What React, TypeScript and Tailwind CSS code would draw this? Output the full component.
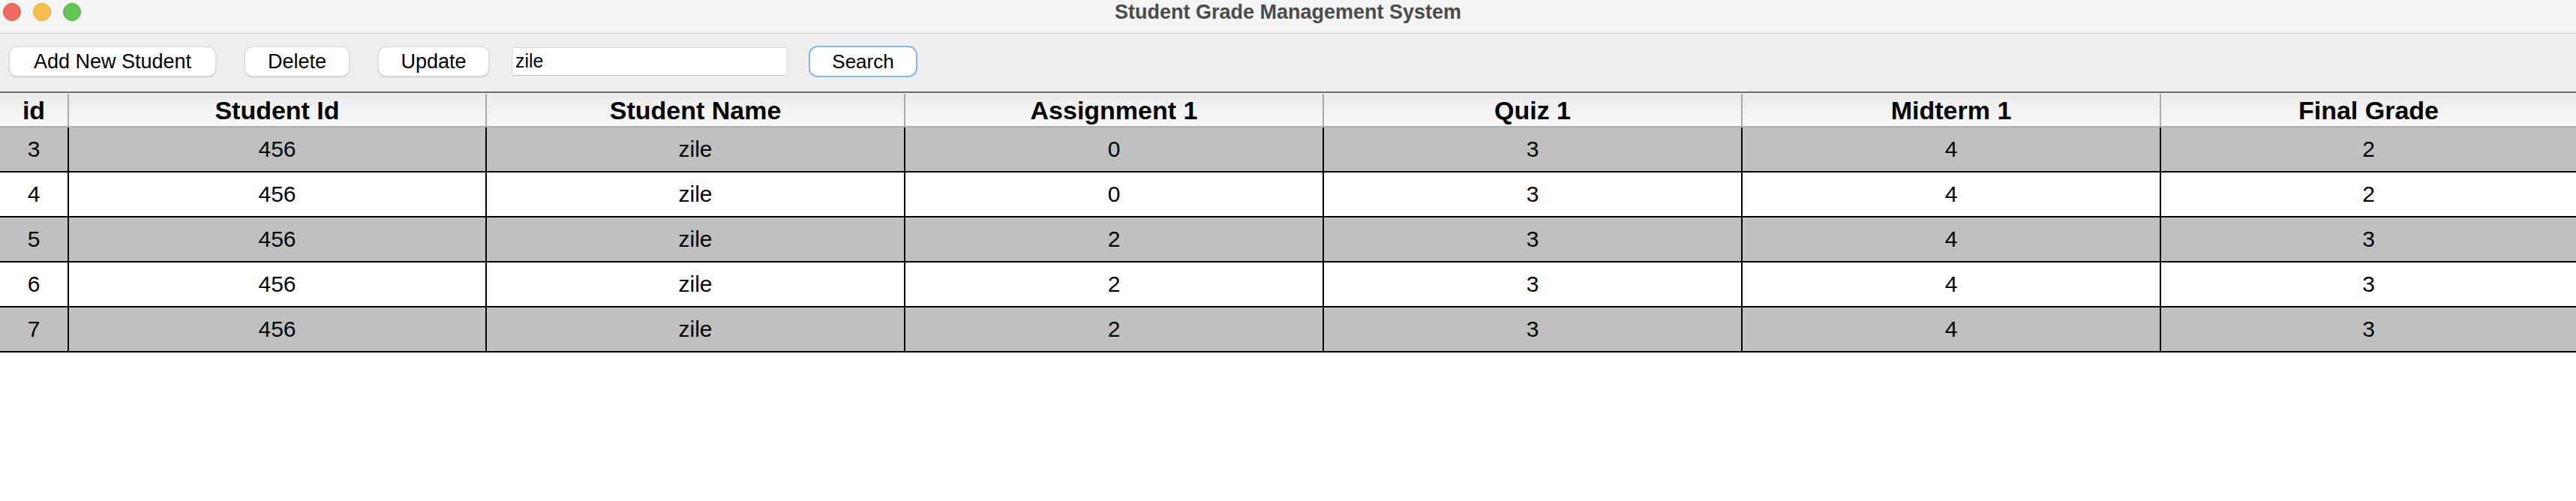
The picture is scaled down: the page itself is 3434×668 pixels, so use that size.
import React from "react";

const headers = ["id", "Student Id", "Student Name", "Assignment 1", "Quiz 1", "Midterm 1", "Final Grade"];
const rows = [
  ["3", "456", "zile", "0", "3", "4", "2"],
  ["4", "456", "zile", "0", "3", "4", "2"],
  ["5", "456", "zile", "2", "3", "4", "3"],
  ["6", "456", "zile", "2", "3", "4", "3"],
  ["7", "456", "zile", "2", "3", "4", "3"],
];

const cols = "grid grid-cols-[92px_557px_558px_558px_558px_558px_1fr]";

function Btn({ label, w, ml }: { label: string; w: string; ml: string }) {
  return (
    <div
      className={`${w} ${ml} h-[40px] bg-white rounded-[11px] border border-[#dcdcdc] shadow-[0_1px_2px_rgba(0,0,0,0.18)] flex items-center justify-center text-[27px] text-black leading-none`}
    >
      {label}
    </div>
  );
}

export default function App() {
  return (
    <div
      className="w-[3434px] h-[668px] bg-white flex flex-col overflow-hidden"
      style={{ fontFamily: '"Liberation Sans", Arial, sans-serif' }}
    >
      {/* Title bar */}
      <div className="h-[45px] bg-[#f4f4f4] border-b border-[#cbcbcb] grid grid-cols-[1fr_auto_1fr] items-start">
        <div className="flex gap-[16px] pl-[4px] pt-[4px]">
          <div className="w-[24px] h-[24px] rounded-full bg-[#ee6a5f] border border-[#d9574c]" />
          <div className="w-[24px] h-[24px] rounded-full bg-[#f5bf4f] border border-[#dca53a]" />
          <div className="w-[24px] h-[24px] rounded-full bg-[#62c554] border border-[#4fae41]" />
        </div>
        <div className="pt-[3px] text-[27px] font-bold text-[#4b4b4b] leading-[26px]">
          Student Grade Management System
        </div>
        <div />
      </div>

      {/* Toolbar */}
      <div className="h-[77px] bg-[#eeeeee] flex items-start pt-[17px] pl-[12px]">
        <Btn label="Add New Student" w="w-[276px]" ml="ml-0" />
        <Btn label="Delete" w="w-[140px]" ml="ml-[38px]" />
        <Btn label="Update" w="w-[148px]" ml="ml-[38px]" />
        <div className="ml-[31px] mt-[1px] w-[366px] h-[38px] bg-white border-t border-[#d2d2d2] border-b border-b-[#c2c2c2] border-x border-x-[#e2e2e2] flex items-center pl-[3px] text-[25px] text-black">
          zile
        </div>
        <div className="ml-[29px] -mt-[1px] w-[145px] h-[42px] bg-white rounded-[12px] border-2 border-[#8ab4ec] flex items-center justify-center text-[26px] text-black leading-none">
          Search
        </div>
      </div>

      {/* Table */}
      <div className="h-[2px] bg-[#6b6b6b]" />
      <div className="h-[1px] bg-white" />
      <div className={`${cols} h-[45px] bg-gradient-to-b from-[#ebebeb] to-[#f8f8f8] border-b-2 border-[#b0b0b0]`}>
        {headers.map((h, i) => (
          <div
            key={h}
            className={`flex items-center justify-center text-[34px] font-bold text-black leading-none ${
              i < headers.length - 1 ? "border-r-2 border-[#aaaaaa]" : ""
            }`}
          >
            {h}
          </div>
        ))}
      </div>
      {rows.map((r, ri) => (
        <div
          key={ri}
          className={`${cols} h-[60px] border-b-2 border-black ${ri % 2 === 0 ? "bg-[#c0c0c0]" : "bg-white"}`}
        >
          {r.map((c, ci) => (
            <div
              key={ci}
              className={`flex items-center justify-center text-[30px] text-black leading-none ${
                ci < r.length - 1 ? "border-r-2 border-black" : ""
              }`}
            >
              {c}
            </div>
          ))}
        </div>
      ))}
      <div className="flex-1 bg-white" />
    </div>
  );
}
